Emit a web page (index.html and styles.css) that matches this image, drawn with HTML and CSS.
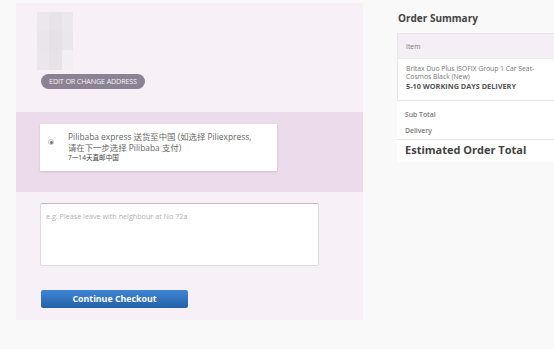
FILE: index.html
```html
<!DOCTYPE html>
<html>
<head>
<meta charset="utf-8">
<link rel="stylesheet" href="styles.css">
</head>
<body>
<div class="page">
  <div class="main">
    <div class="address">
      <div class="photo">
        <div class="px px1"></div><div class="px px2"></div><div class="px px3"></div>
        <div class="px px4"></div><div class="px px5"></div><div class="px px6"></div>
        <div class="px px7"></div><div class="px px8"></div><div class="px px9"></div>
      </div>
      <button class="edit-btn">EDIT OR CHANGE ADDRESS</button>
    </div>
    <div class="shipping">
      <label class="option">
        <span class="radio"><span class="dot"></span></span>
        <span class="opt-text">
          <span class="opt-title">Pilibaba express 送货至中国 (如选择 Piliexpress,<br>请在下一步选择 Pilibaba 支付)</span>
          <span class="opt-sub">7一14天直邮中国</span>
        </span>
      </label>
    </div>
    <div class="notes">
      <div class="textarea">e.g. Please leave with neighbour at No 72a</div>
      <button class="continue">Continue Checkout</button>
    </div>
  </div>
  <div class="summary">
    <h2 class="sum-title">Order Summary</h2>
    <div class="sum-box">
      <div class="items">
        <div class="items-head">Item</div>
        <div class="item">
          <div class="item-name">Britax Duo Plus ISOFIX Group 1 Car Seat-<br>Cosmos Black (New)</div>
          <div class="item-del">5-10 WORKING DAYS DELIVERY</div>
        </div>
      </div>
      <div class="rows">
        <div class="row">Sub Total</div>
        <div class="row">Delivery</div>
      </div>
      <div class="total">Estimated Order Total</div>
    </div>
  </div>
</div>
</body>
</html>
```
FILE: styles.css
```css
* { box-sizing: border-box; }
html, body { margin: 0; padding: 0; }
body {
  background: #f9f9f9;
  font-family: "Open Sans", "Noto Sans CJK SC", sans-serif;
  color: #555;
  width: 554px;
  height: 349px;
  overflow: hidden;
}
.page {
  display: flex;
  align-items: flex-start;
}
.main {
  margin: 3px 0 0 16px;
  width: 347px;
  height: 317px;
  background: #f7f0f7;
  display: flex;
  flex-direction: column;
}
.address {
  padding: 9px 0 0 21px;
  height: 109px;
}
.photo {
  width: 36px;
  height: 58px;
  display: grid;
  grid-template-columns: 12px 13px 11px;
  grid-template-rows: 19px 19px 20px;
}
.px1 { background: #ebe7ed; }
.px2 { background: #e7e3e9; }
.px3 { background: #ebe7ed; }
.px4 { background: #e9e5eb; }
.px5 { background: #e5e1e7; }
.px6 { background: #eae6ec; }
.px7 { background: #eae6ec; }
.px8 { background: #e6e2e8; }
.px9 { background: #f2eef3; }
.edit-btn {
  display: block;
  margin: 4px 0 0 4px;
  width: 104px;
  height: 15px;
  border: 0;
  border-radius: 8px;
  background: #8b8393;
  color: #f4f0f6;
  font-family: "Open Sans", sans-serif;
  font-size: 7.2px;
  letter-spacing: -0.15px;
  padding: 0;
  line-height: 15px;
}
.shipping {
  height: 80px;
  background: #ebdbeb;
  padding: 12px 0 0 24px;
}
.option {
  display: flex;
  align-items: flex-start;
  width: 237px;
  height: 47px;
  background: #fff;
  box-shadow: 0 1px 2px rgba(0,0,0,0.12);
  padding: 8px 0 0 8px;
}
.radio {
  width: 6px;
  height: 6px;
  border-radius: 50%;
  border: 1px solid #ccc;
  background: #f2f2f2;
  margin: 7px 0 0 0;
  display: flex;
  align-items: center;
  justify-content: center;
  flex: none;
}
.dot { width: 3px; height: 3px; border-radius: 50%; background: #777; }
.opt-text {
  margin-left: 14px;
  display: flex;
  flex-direction: column;
}
.opt-title {
  font-size: 8.4px;
  line-height: 10.5px;
  color: #666;
}
.opt-sub {
  font-size: 6.6px;
  line-height: 10px;
  color: #444;
}
.notes {
  padding: 11px 0 0 24px;
}
.textarea {
  width: 279px;
  height: 63px;
  background: #fff;
  border: 1px solid #dcdcdc;
  border-top: 1px solid #bdbdbd;
  border-radius: 2px;
  font-size: 7.2px;
  color: #b0b0b0;
  padding: 7px 5px;
}
.continue {
  display: block;
  margin: 24px 0 0 1px;
  width: 147px;
  height: 18px;
  border: 0;
  border-radius: 2px;
  background: linear-gradient(#3f86d6, #2460a6);
  color: #fff;
  font-family: "Open Sans", sans-serif;
  font-weight: 700;
  font-size: 8.8px;
  padding: 0;
}
.summary {
  margin-left: 34px;
  flex: 1;
}
.sum-title {
  margin: 11px 0 0 1px;
  font-size: 10px;
  line-height: 14px;
  font-weight: 700;
  color: #444;
}
.sum-box {
  margin-top: 8px;
  background: #fff;
  padding-bottom: 4px;
}
.items {
  border: 1px solid #e6e6e6;
  border-right: 0;
}
.items-head {
  height: 24px;
  background: #f6eef6;
  font-size: 6.8px;
  line-height: 25px;
  padding-left: 8px;
  color: #777;
}
.item {
  padding: 6px 8px 9px;
  border-top: 1px solid #eee;
}
.item-name {
  font-size: 6.9px;
  line-height: 8px;
  color: #777;
  letter-spacing: -0.05px;
}
.item-del {
  font-size: 7.3px;
  line-height: 10px;
  font-weight: 700;
  color: #555;
}
.rows {
  padding-top: 6px;
}
.row {
  font-size: 6.8px;
  font-weight: 600;
  color: #777;
  line-height: 16px;
  padding-left: 8px;
}
.total {
  border-top: 1px solid #e6e6e6;
  margin-top: 0;
  padding: 2px 0 0 8px;
  font-size: 11px;
  font-weight: 700;
  color: #444;
  line-height: 16px;
}
```
